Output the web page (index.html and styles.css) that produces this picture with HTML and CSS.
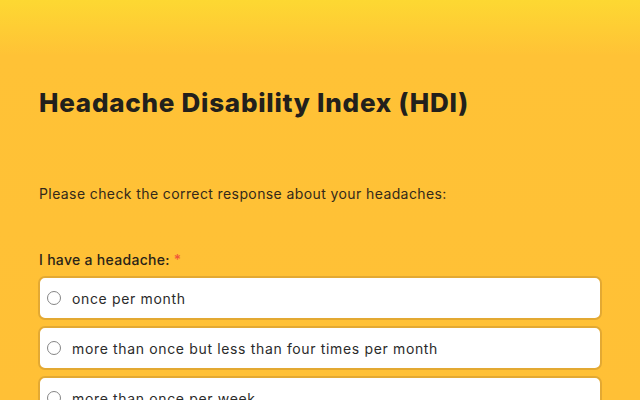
FILE: index.html
```html
<!DOCTYPE html>
<html lang="en">
<head>
<meta charset="utf-8">
<title>Headache Disability Index (HDI)</title>
<link rel="stylesheet" href="styles.css">
</head>
<body>
<main class="form">
  <h1 class="title">Headache Disability Index (HDI)</h1>
  <p class="intro">Please check the correct response about your headaches:</p>
  <fieldset class="question">
    <legend class="label">I have a headache: <span class="req">*</span></legend>
    <div class="options">
      <label class="option"><span class="radio"></span><span class="opt-text">once per month</span></label>
      <label class="option"><span class="radio"></span><span class="opt-text">more than once but less than four times per month</span></label>
      <label class="option"><span class="radio"></span><span class="opt-text">more than once per week</span></label>
    </div>
  </fieldset>
</main>
</body>
</html>
```
FILE: styles.css
```css
html, body {
  margin: 0;
  padding: 0;
}
body {
  width: 640px;
  height: 400px;
  overflow: hidden;
  background: linear-gradient(to bottom, #fdd832 0px, #ffc236 56px, #ffc036 100%);
  font-family: Inter, "Liberation Sans", sans-serif;
  color: #2a2418;
}
.form {
  padding: 88px 38px 0 38px;
}
.title {
  margin: 0 0 0 1px;
  font-size: 26px;
  line-height: 30px;
  font-weight: 800;
  color: #22201c;
  letter-spacing: 0.75px;
}
.intro {
  margin: 66px 0 0 1px;
  font-size: 14px;
  line-height: 20px;
  color: #33291a;
  letter-spacing: 0.4px;
}
.question {
  margin: 46px 0 0 0;
  padding: 0;
  border: 0;
}
.label {
  padding: 0 0 0 1px;
  font-size: 14px;
  line-height: 20px;
  font-weight: 500;
  color: #2a2418;
  letter-spacing: 0.3px;
}
.req {
  color: #f0583a;
}
.options {
  margin-top: 6px;
  display: flex;
  flex-direction: column;
  gap: 6px;
}
.option {
  box-sizing: border-box;
  display: flex;
  align-items: center;
  gap: 11px;
  height: 44px;
  width: 564px;
  padding: 0 0 0 7px;
  background: #fff;
  border: 2px solid #e3a933;
  border-radius: 7px;
}
.radio {
  width: 12px;
  height: 12px;
  border: 1px solid #858585;
  border-radius: 50%;
  background: #fff;
  flex: none;
}
.opt-text {
  font-size: 14px;
  color: #2b2b2b;
  letter-spacing: 0.65px;
}
```
